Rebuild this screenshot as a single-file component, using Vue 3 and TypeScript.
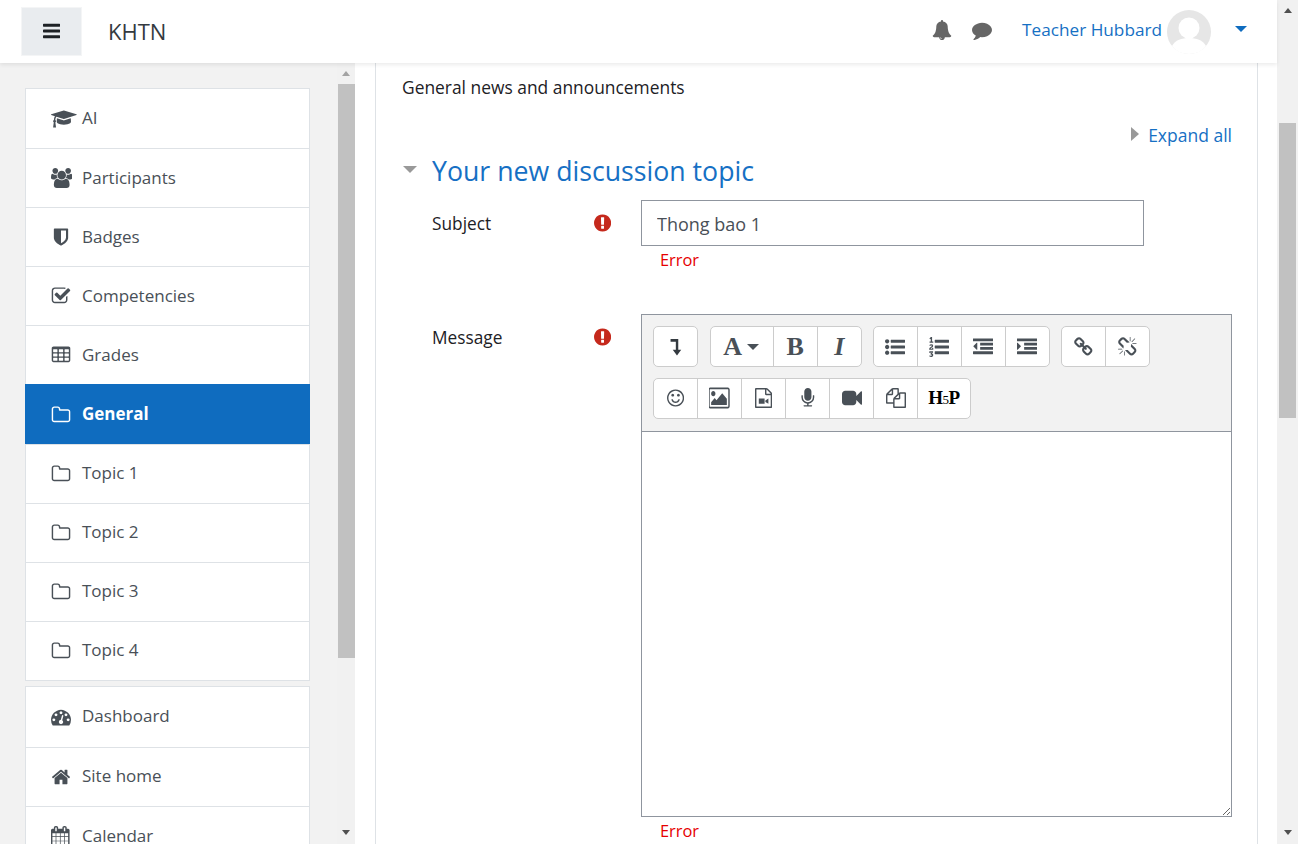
<script setup lang="ts">
import { h } from 'vue'
import type { FunctionalComponent } from 'vue'

// font-awesome style glyphs: [viewBox width, path]
const icons: Record<string, [number, string]> = {
  bars: [1536, 'M1536 1344v128q0 26-19 45t-45 19h-1408q-26 0-45-19t-19-45v-128q0-26 19-45t45-19h1408q26 0 45 19t19 45zm0-512v128q0 26-19 45t-45 19h-1408q-26 0-45-19t-19-45v-128q0-26 19-45t45-19h1408q26 0 45 19t19 45zm0-512v128q0 26-19 45t-45 19h-1408q-26 0-45-19t-19-45v-128q0-26 19-45t45-19h1408q26 0 45 19t19 45z'],
  bell: [1792, 'M912 1696q0-16-16-16-59 0-101.5-42.5t-42.5-101.5q0-16-16-16t-16 16q0 73 51.5 124.5t124.5 51.5q16 0 16-16zm816-288q0 52-38 90t-90 38h-448q0 106-75 181t-181 75-181-75-75-181h-448q-52 0-90-38t-38-90q50-42 91-88t85-119.5 74.5-158.5 50-206 19.5-260q0-152 117-282.5t307-158.5q-8-19-8-39 0-40 28-68t68-28 68 28 28 68q0 20-8 39 190 28 307 158.5t117 282.5q0 139 19.5 260t50 206 74.5 158.5 85 119.5 91 88z'],
  comment: [1792, 'M1792 896q0 174-120 321.5t-326 233-450 85.5q-70 0-145-8-198 175-460 242-49 14-114 22-17 2-30.5-9t-17.5-29v-1q-3-4-.5-12t2-10 4.5-9.5l6-9 7-8.5 8-9q7-8 31-34.5t34.5-38 31-39.5 32.5-51 27-59 26-76q-157-89-247.5-220t-90.5-281q0-130 71-248.5t191-204.5 286-136.5 348-50.5q244 0 450 85.5t326 233 120 321.5z'],
  cap: [2304, 'M1774 836l18 316q4 69-82 128t-235 93.5-323 34.5-323-34.5-235-93.5-82-128l18-316 574 181q22 7 48 7t48-7zm530-324q0 23-22 31l-1120 352q-4 1-10 1t-10-1l-652-206q-43 34-71 111.5t-34 178.5q63 36 63 109 0 69-58 107l58 433q2 14-8 25-9 11-24 11h-192q-15 0-24-11-10-11-8-25l58-433q-58-38-58-107 0-73 65-111 11-207 98-330l-333-104q-22-8-22-31t22-31l1120-352q4-1 10-1t10 1l1120 352q22 8 22 31z'],
  users: [1920, 'M593 896q-162 5-265 128h-134q-82 0-138-40.5t-56-118.5q0-353 124-353 6 0 43.5 21t97.5 42.5 119 21.5q67 0 133-23-5 37-5 66 0 139 81 256zm1071 637q0 120-73 189.5t-194 69.5h-874q-121 0-194-69.5t-73-189.5q0-53 3.5-103.5t14-109 26.5-108.5 43-97.5 62-81 85.5-53.5 111.5-20q10 0 43 21.5t73 48 107 48 135 21.5 135-21.5 107-48 73-48 43-21.5q61 0 111.5 20t85.5 53.5 62 81 43 97.5 26.5 108.5 14 109 3.5 103.5zm-1024-1277q0 106-75 181t-181 75-181-75-75-181 75-181 181-75 181 75 75 181zm704 384q0 159-112.5 271.5t-271.5 112.5-271.5-112.5-112.5-271.5 112.5-271.5 271.5-112.5 271.5 112.5 112.5 271.5zm576 225q0 78-56 118.5t-138 40.5h-134q-103-123-265-128 81-117 81-256 0-29-5-66 66 23 133 23 59 0 119-21.5t97.5-42.5 43.5-21q124 0 124 353zm-128-609q0 106-75 181t-181 75-181-75-75-181 75-181 181-75 181 75 75 181z'],
  shield: [1792, 'M1344 960v-640h-448v1137q119-63 213-137 235-184 235-360zm192-768v768q0 86-33.5 170.5t-83 150-118 127.5-126.5 103-121 77.5-89.5 49.5-42.5 20q-12 6-26 6t-26-6q-16-7-42.5-20t-89.5-49.5-121-77.5-126.5-103-118-127.5-83-150-33.5-170.5v-768q0-26 19-45t45-19h1152q26 0 45 19t19 45z'],
  check: [1792, 'M1472 930v318q0 119-84.5 203.5t-203.5 84.5h-832q-119 0-203.5-84.5t-84.5-203.5v-832q0-119 84.5-203.5t203.5-84.5h832q63 0 117 25 15 7 18 23 3 17-9 29l-49 49q-10 10-23 10-3 0-9-2-23-6-45-6h-832q-66 0-113 47t-47 113v832q0 66 47 113t113 47h832q66 0 113-47t47-113v-254q0-13 9-22l64-64q10-10 23-10 6 0 12 3 20 8 20 29zm231-489l-814 814q-24 24-57 24t-57-24l-430-430q-24-24-24-57t24-57l110-110q24-24 57-24t57 24l263 263 647-647q24-24 57-24t57 24l110 110q24 24 24 57t-24 57z'],
  table: [1792, 'M576 1376v-192q0-14-9-23t-23-9h-320q-14 0-23 9t-9 23v192q0 14 9 23t23 9h320q14 0 23-9t9-23zm0-384v-192q0-14-9-23t-23-9h-320q-14 0-23 9t-9 23v192q0 14 9 23t23 9h320q14 0 23-9t9-23zm512 384v-192q0-14-9-23t-23-9h-320q-14 0-23 9t-9 23v192q0 14 9 23t23 9h320q14 0 23-9t9-23zm-512-768v-192q0-14-9-23t-23-9h-320q-14 0-23 9t-9 23v192q0 14 9 23t23 9h320q14 0 23-9t9-23zm512 384v-192q0-14-9-23t-23-9h-320q-14 0-23 9t-9 23v192q0 14 9 23t23 9h320q14 0 23-9t9-23zm512 384v-192q0-14-9-23t-23-9h-320q-14 0-23 9t-9 23v192q0 14 9 23t23 9h320q14 0 23-9t9-23zm-512-768v-192q0-14-9-23t-23-9h-320q-14 0-23 9t-9 23v192q0 14 9 23t23 9h320q14 0 23-9t9-23zm512 384v-192q0-14-9-23t-23-9h-320q-14 0-23 9t-9 23v192q0 14 9 23t23 9h320q14 0 23-9t9-23zm0-384v-192q0-14-9-23t-23-9h-320q-14 0-23 9t-9 23v192q0 14 9 23t23 9h320q14 0 23-9t9-23zm128-320v1088q0 66-47 113t-113 47h-1344q-66 0-113-47t-47-113v-1088q0-66 47-113t113-47h1344q66 0 113 47t47 113z'],
  folder: [1792, 'M1600 1312v-704q0-40-28-68t-68-28h-704q-40 0-68-28t-28-68v-64q0-40-28-68t-68-28h-320q-40 0-68 28t-28 68v960q0 40 28 68t68 28h1216q40 0 68-28t28-68zm128-704v704q0 92-66 158t-158 66h-1216q-92 0-158-66t-66-158v-960q0-92 66-158t158-66h320q92 0 158 66t66 158v32h672q92 0 158 66t66 158z'],
  dashboard: [1792, 'M384 1152q0-53-37.5-90.5t-90.5-37.5-90.5 37.5-37.5 90.5 37.5 90.5 90.5 37.5 90.5-37.5 37.5-90.5zm192-448q0-53-37.5-90.5t-90.5-37.5-90.5 37.5-37.5 90.5 37.5 90.5 90.5 37.5 90.5-37.5 37.5-90.5zm428 481l101-382q6-26-7.5-48.5t-38.5-29.5-48 6.5-30 39.5l-101 382q-60 5-107 43.5t-63 98.5q-20 77 20 146t117 89 146-20 89-117q16-60-6-117t-72-91zm660-33q0-53-37.5-90.5t-90.5-37.5-90.5 37.5-37.5 90.5 37.5 90.5 90.5 37.5 90.5-37.5 37.5-90.5zm-640-640q0-53-37.5-90.5t-90.5-37.5-90.5 37.5-37.5 90.5 37.5 90.5 90.5 37.5 90.5-37.5 37.5-90.5zm448 192q0-53-37.5-90.5t-90.5-37.5-90.5 37.5-37.5 90.5 37.5 90.5 90.5 37.5 90.5-37.5 37.5-90.5zm320 448q0 261-141 483-19 29-54 29h-1402q-35 0-54-29-141-221-141-483 0-182 71-348t191-286 286-191 348-71 348 71 286 191 191 286 71 348z'],
  home: [1792, 'M1472 992v480q0 26-19 45t-45 19h-384v-384h-256v384h-384q-26 0-45-19t-19-45v-480q0-1 .5-3t.5-3l575-474 575 474q1 2 1 6zm223-69l-62 74q-8 9-21 11h-3q-13 0-21-7l-692-577-692 577q-12 8-24 7-13-2-21-11l-62-74q-8-10-7-23.5t11-21.5l719-599q32-26 76-26t76 26l244 204v-195q0-14 9-23t23-9h192q14 0 23 9t9 23v408l219 182q10 8 11 21.5t-7 23.5z'],
  calendar: [1664, 'M128 1664h288v-288h-288v288zm352 0h320v-288h-320v288zm-352-352h288v-320h-288v320zm352 0h320v-320h-320v320zm-352-384h288v-288h-288v288zm736 736h320v-288h-320v288zm-384-736h320v-288h-320v288zm768 736h288v-288h-288v288zm-384-352h320v-320h-320v320zm-352-864v-288q0-13-9.5-22.5t-22.5-9.5h-64q-13 0-22.5 9.5t-9.5 22.5v288q0 13 9.5 22.5t22.5 9.5h64q13 0 22.5-9.5t9.5-22.5zm736 864h288v-320h-288v320zm-384-384h320v-288h-320v288zm384 0h288v-288h-288v288zm32-480v-288q0-13-9.5-22.5t-22.5-9.5h-64q-13 0-22.5 9.5t-9.5 22.5v288q0 13 9.5 22.5t22.5 9.5h64q13 0 22.5-9.5t9.5-22.5zm384-64v1280q0 52-38 90t-90 38h-1408q-52 0-90-38t-38-90v-1280q0-52 38-90t90-38h128v-96q0-66 47-113t113-47h64q66 0 113 47t47 113v96h384v-96q0-66 47-113t113-47h64q66 0 113 47t47 113v96h128q52 0 90 38t38 90z'],
  alert: [1536, 'M768 128q209 0 385.5 103t279.5 279.5 103 385.5-103 385.5-279.5 279.5-385.5 103-385.5-103-279.5-279.5-103-385.5 103-385.5 279.5-279.5 385.5-103zm128 1247v-190q0-14-9-23.5t-22-9.5h-192q-13 0-23 10t-10 23v190q0 13 10 23t23 10h192q13 0 22-9.5t9-23.5zm-2-344l18-621q0-12-10-18-10-8-24-8h-220q-14 0-24 8-10 6-10 18l17 621q0 10 10 17.5t24 7.5h185q14 0 23.5-7.5t10.5-17.5z'],
  collapse: [1100, 'M200 320H800V1150H1030L700 1600 370 1150H610V520H200Z'],
  listUl: [1792, 'M384 1408q0 80-56 136t-136 56-136-56-56-136 56-136 136-56 136 56 56 136zm0-512q0 80-56 136t-136 56-136-56-56-136 56-136 136-56 136 56 56 136zm1408 416v192q0 13-9.5 22.5t-22.5 9.5h-1216q-13 0-22.5-9.5t-9.5-22.5v-192q0-13 9.5-22.5t22.5-9.5h1216q13 0 22.5 9.5t9.5 22.5zm-1408-928q0 80-56 136t-136 56-136-56-56-136 56-136 136-56 136 56 56 136zm1408 416v192q0 13-9.5 22.5t-22.5 9.5h-1216q-13 0-22.5-9.5t-9.5-22.5v-192q0-13 9.5-22.5t22.5-9.5h1216q13 0 22.5 9.5t9.5 22.5zm0-512v192q0 13-9.5 22.5t-22.5 9.5h-1216q-13 0-22.5-9.5t-9.5-22.5v-192q0-13 9.5-22.5t22.5-9.5h1216q13 0 22.5 9.5t9.5 22.5z'],
  listOl: [1792, 'M381 1620q0 80-54.5 126t-135.5 46q-106 0-172-66l57-88q49 45 106 45 29 0 50.5-14.5t21.5-42.5q0-64-105-56l-26-56q8-10 32.5-43.5t42.5-54 37-38.5v-1q-16 0-48.5 1t-48.5 1v53h-106v-152h333v88l-95 115q51 12 81 49t30 88zm2-627v159h-362q-6-36-6-54 0-51 23.5-93t56.5-68 66-47.5 56.5-43.5 23.5-45q0-25-14.5-38.5t-39.5-13.5q-46 0-81 58l-85-59q24-51 71.5-79.5t105.5-28.5q73 0 123 41.5t50 112.5q0 50-34 91.5t-75 64.5-75.5 50.5-35.5 52.5h127v-60h105zm1409 319v192q0 13-9.5 22.5t-22.5 9.5h-1216q-13 0-22.5-9.5t-9.5-22.5v-192q0-14 9-23t23-9h1216q13 0 22.5 9.5t9.5 22.5zm-1408-899v99h-335v-99h107q0-41 .5-122t.5-121v-12h-2q-8 17-50 54l-71-76 136-127h106v404h108zm1408 387v192q0 13-9.5 22.5t-22.5 9.5h-1216q-13 0-22.5-9.5t-9.5-22.5v-192q0-14 9-23t23-9h1216q13 0 22.5 9.5t9.5 22.5zm0-512v192q0 13-9.5 22.5t-22.5 9.5h-1216q-13 0-22.5-9.5t-9.5-22.5v-192q0-13 9.5-22.5t22.5-9.5h1216q13 0 22.5 9.5t9.5 22.5z'],
  outdent: [1792, 'M384 544v576q0 13-9.5 22.5t-22.5 9.5q-14 0-23-9l-288-288q-9-9-9-23t9-23l288-288q9-9 23-9 13 0 22.5 9.5t9.5 22.5zm1408 768v192q0 13-9.5 22.5t-22.5 9.5h-1728q-13 0-22.5-9.5t-9.5-22.5v-192q0-13 9.5-22.5t22.5-9.5h1728q13 0 22.5 9.5t9.5 22.5zm0-384v192q0 13-9.5 22.5t-22.5 9.5h-1088q-13 0-22.5-9.5t-9.5-22.5v-192q0-13 9.5-22.5t22.5-9.5h1088q13 0 22.5 9.5t9.5 22.5zm0-384v192q0 13-9.5 22.5t-22.5 9.5h-1088q-13 0-22.5-9.5t-9.5-22.5v-192q0-13 9.5-22.5t22.5-9.5h1088q13 0 22.5 9.5t9.5 22.5zm0-384v192q0 13-9.5 22.5t-22.5 9.5h-1728q-13 0-22.5-9.5t-9.5-22.5v-192q0-13 9.5-22.5t22.5-9.5h1728q13 0 22.5 9.5t9.5 22.5z'],
  indent: [1792, 'M352 832q0 14-9 23l-288 288q-9 9-23 9-13 0-22.5-9.5t-9.5-22.5v-576q0-13 9.5-22.5t22.5-9.5q14 0 23 9l288 288q9 9 9 23zm1440 480v192q0 13-9.5 22.5t-22.5 9.5h-1728q-13 0-22.5-9.5t-9.5-22.5v-192q0-13 9.5-22.5t22.5-9.5h1728q13 0 22.5 9.5t9.5 22.5zm0-384v192q0 13-9.5 22.5t-22.5 9.5h-1088q-13 0-22.5-9.5t-9.5-22.5v-192q0-13 9.5-22.5t22.5-9.5h1088q13 0 22.5 9.5t9.5 22.5zm0-384v192q0 13-9.5 22.5t-22.5 9.5h-1088q-13 0-22.5-9.5t-9.5-22.5v-192q0-13 9.5-22.5t22.5-9.5h1088q13 0 22.5 9.5t9.5 22.5zm0-384v192q0 13-9.5 22.5t-22.5 9.5h-1728q-13 0-22.5-9.5t-9.5-22.5v-192q0-13 9.5-22.5t22.5-9.5h1728q13 0 22.5 9.5t9.5 22.5z'],
  link: [1664, 'M1456 1216q0-40-28-68l-208-208q-28-28-68-28-42 0-72 32 3 3 19 18.5t21.5 21.5 15 19 13 25.5 3.5 27.5q0 40-28 68t-68 28q-15 0-27.5-3.5t-25.5-13-19-15-21.5-21.5-18.5-19q-33 31-33 73 0 40 28 68l206 207q27 27 68 27 40 0 68-26l147-146q28-28 28-67zm-703-705q0-40-28-68l-206-207q-28-28-68-28-39 0-68 27l-147 146q-28 28-28 67 0 40 28 68l208 208q27 27 68 27 42 0 72-31-3-3-19-18.5t-21.5-21.5-15-19-13-25.5-3.5-27.5q0-40 28-68t68-28q15 0 27.5 3.5t25.5 13 19 15 21.5 21.5 18.5 19q33-31 33-73zm895 705q0 120-85 203l-147 146q-83 83-203 83-121 0-204-85l-206-207q-83-83-83-203 0-123 88-209l-88-88q-86 88-208 88-120 0-204-84l-208-208q-84-84-84-204t85-203l147-146q83-83 203-83 121 0 204 85l206 207q83 83 83 203 0 123-88 209l88 88q86-88 208-88 120 0 204 84l208 208q84 84 84 204z'],
  unlink: [1664, 'M439 1271l-256 256q-11 9-23 9t-23-9q-9-10-9-23t9-23l256-256q10-9 23-9t23 9q9 10 9 23t-9 23zm169 41v320q0 14-9 23t-23 9-23-9-9-23v-320q0-14 9-23t23-9 23 9 9 23zm-224-224q0 14-9 23t-23 9h-320q-14 0-23-9t-9-23 9-23 23-9h320q14 0 23 9t9 23zm1264 128q0 120-85 203l-147 146q-83 83-203 83-121 0-204-85l-334-335q-21-21-42-56l239-18 273 274q27 27 68 27.5t68-26.5l147-146q28-28 28-67 0-40-28-68l-274-275 18-239q35 21 56 42l336 336q84 86 84 204zm-617-724l-239 18-273-274q-28-28-68-28-39 0-68 27l-147 146q-28 28-28 67 0 40 28 68l274 274-18 240q-35-21-56-42l-336-336q-84-86-84-204 0-120 85-203l147-146q83-83 203-83 121 0 204 85l334 335q21 21 42 56zm633 84q0 14-9 23t-23 9h-320q-14 0-23-9t-9-23 9-23 23-9h320q14 0 23 9t9 23zm-544-544v320q0 14-9 23t-23 9-23-9-9-23v-320q0-14 9-23t23-9 23 9 9 23zm407 151l-256 256q-11 9-23 9t-23-9q-9-10-9-23t9-23l256-256q10-9 23-9t23 9q9 10 9 23t-9 23z'],
  smile: [1536, 'M1134 1075q-37 121-138 195t-228 74-228-74-138-195q-8-25 4-48.5t38-31.5q25-8 48.5 4t31.5 38q25 80 92.5 129.5t151.5 49.5 151.5-49.5 92.5-129.5q8-26 32-38t49-4 37 31.5 4 48.5zm-494-435q0 53-37.5 90.5t-90.5 37.5-90.5-37.5-37.5-90.5 37.5-90.5 90.5-37.5 90.5 37.5 37.5 90.5zm512 0q0 53-37.5 90.5t-90.5 37.5-90.5-37.5-37.5-90.5 37.5-90.5 90.5-37.5 90.5 37.5 37.5 90.5zm256 256q0-130-51-248.5t-136.5-204-204-136.5-248.5-51-248.5 51-204 136.5-136.5 204-51 248.5 51 248.5 136.5 204 204 136.5 248.5 51 248.5-51 204-136.5 136.5-204 51-248.5zm128 0q0 209-103 385.5t-279.5 279.5-385.5 103-385.5-103-279.5-279.5-103-385.5 103-385.5 279.5-279.5 385.5-103 385.5 103 279.5 279.5 103 385.5z'],
  image: [1920, 'M576 576q0 80-56 136t-136 56-136-56-56-136 56-136 136-56 136 56 56 136zm1024 384v448h-1408v-192l320-320 160 160 512-512zm96-704h-1600q-13 0-22.5 9.5t-9.5 22.5v1216q0 13 9.5 22.5t22.5 9.5h1600q13 0 22.5-9.5t9.5-22.5v-1216q0-13-9.5-22.5t-22.5-9.5zm160 32v1216q0 66-47 113t-113 47h-1600q-66 0-113-47t-47-113v-1216q0-66 47-113t113-47h1600q66 0 113 47t47 113z'],
  fileVideo: [1536, 'M1468 380q28 28 48 76t20 88v1152q0 40-28 68t-68 28h-1344q-40 0-68-28t-28-68v-1600q0-40 28-68t68-28h896q40 0 88 20t76 48zm-444-244v376h376q-10-29-22-41l-313-313q-12-12-41-22zm384 1528v-1024h-416q-40 0-68-28t-28-68v-416h-768v1536h1280zM340 940h520v480H340zM930 1110l270-170v480l-270-170z'],
  mic: [1408, 'M1280 704v128q0 221-147.5 384.5t-364.5 187.5v132h256q26 0 45 19t19 45-19 45-45 19h-640q-26 0-45-19t-19-45 19-45 45-19h256v-132q-217-24-364.5-187.5t-147.5-384.5v-128q0-26 19-45t45-19 45 19 19 45v128q0 185 131.5 316.5t316.5 131.5 316.5-131.5 131.5-316.5v-128q0-26 19-45t45-19 45 19 19 45zm-256-384v512q0 132-94 226t-226 94-226-94-94-226v-512q0-132 94-226t226-94 226 94 94 226z'],
  video: [1792, 'M1792 352v1088q0 42-39 59-13 5-25 5-27 0-45-19l-403-403v166q0 119-84.5 203.5t-203.5 84.5h-704q-119 0-203.5-84.5t-84.5-203.5v-704q0-119 84.5-203.5t203.5-84.5h704q119 0 203.5 84.5t84.5 203.5v165l403-402q18-19 45-19 12 0 25 5 39 17 39 59z'],
  copy: [1792, 'M1696 384q40 0 68 28t28 68v1216q0 40-28 68t-68 28h-960q-40 0-68-28t-28-68v-288h-544q-40 0-68-28t-28-68v-672q0-40 20-88t48-76l408-408q28-28 76-48t88-20h416q40 0 68 28t28 68v328q68-40 128-40h416zm-544 213l-299 299h299v-299zm-640-384l-299 299h299v-299zm196 647l316-316v-416h-384v416q0 40-28 68t-68 28h-416v640h512v-256q0-40 20-88t48-76zm956 804v-1152h-384v416q0 40-28 68t-68 28h-416v640h896z']
}

const Icon: FunctionalComponent<{ name: string }> = (props) => {
  const [width, d] = icons[props.name]
  return h('svg', { viewBox: `0 0 ${width} 1792`, fill: 'currentColor', class: 'icon' }, [h('path', { d })])
}
Icon.props = ['name']

interface NavItem {
  label: string
  icon: string
  active?: boolean
}

const courseNav: NavItem[] = [
  { label: 'AI', icon: 'cap' },
  { label: 'Participants', icon: 'users' },
  { label: 'Badges', icon: 'shield' },
  { label: 'Competencies', icon: 'check' },
  { label: 'Grades', icon: 'table' },
  { label: 'General', icon: 'folder', active: true },
  { label: 'Topic 1', icon: 'folder' },
  { label: 'Topic 2', icon: 'folder' },
  { label: 'Topic 3', icon: 'folder' },
  { label: 'Topic 4', icon: 'folder' }
]

const siteNav: NavItem[] = [
  { label: 'Dashboard', icon: 'dashboard' },
  { label: 'Site home', icon: 'home' },
  { label: 'Calendar', icon: 'calendar' }
]
</script>

<template>
  <div class="page">
    <div class="window">
      <header class="navbar">
        <button class="menu-btn"><Icon name="bars" class="menu-icon" /></button>
        <span class="brand">KHTN</span>
        <div class="nav-right">
          <Icon name="bell" class="nav-icon" />
          <Icon name="comment" class="nav-icon chat" />
          <a class="user-name">Teacher Hubbard</a>
          <svg class="avatar" viewBox="0 0 44 44">
            <circle cx="22" cy="22" r="22" fill="#e6e6e6" />
            <circle cx="22" cy="18" r="10.5" fill="#fff" />
            <path d="M5 36c3-6 10-8 17-8s14 2 17 8c-4 5-10 8-17 8S9 41 5 36z" fill="#fff" />
          </svg>
          <span class="user-caret"></span>
        </div>
      </header>

      <div class="body">
        <aside class="drawer">
          <div class="drawer-lists">
            <nav class="nav-group">
              <a v-for="item in courseNav" :key="item.label" class="nav-item" :class="{ active: item.active }">
                <span class="nav-slot"><Icon :name="item.icon" /></span>
                <span class="nav-text">{{ item.label }}</span>
              </a>
            </nav>
            <nav class="nav-group">
              <a v-for="item in siteNav" :key="item.label" class="nav-item">
                <span class="nav-slot"><Icon :name="item.icon" /></span>
                <span class="nav-text">{{ item.label }}</span>
              </a>
            </nav>
          </div>
          <div class="scrollbar drawer-bar">
            <span class="arrow-up faded"></span>
            <span class="thumb"></span>
            <span class="arrow-down"></span>
          </div>
        </aside>

        <main class="main">
          <section class="card">
            <p class="intro">General news and announcements</p>
            <div class="expand-row">
              <span class="caret-right"></span>
              <a class="expand-link">Expand all</a>
            </div>
            <h2 class="legend"><span class="caret-down"></span>Your new discussion topic</h2>

            <div class="form-row">
              <div class="form-label">
                <span>Subject</span>
                <Icon name="alert" class="req" />
              </div>
              <div class="subject-field">
                <input class="subject-input" type="text" value="Thong bao 1" />
                <div class="error">Error</div>
              </div>
            </div>

            <div class="form-row message-row">
              <div class="form-label">
                <span>Message</span>
                <Icon name="alert" class="req" />
              </div>
              <div>
                <div class="editor">
                  <div class="toolbar">
                    <div class="tool-row">
                      <div class="tool-group first">
                        <button class="tool"><Icon name="collapse" class="tool-sm" /></button>
                      </div>
                      <div class="tool-group">
                        <button class="tool tool-font"><span class="serif">A</span><span class="font-caret"></span></button>
                        <button class="tool"><span class="serif">B</span></button>
                        <button class="tool"><span class="serif italic">I</span></button>
                      </div>
                      <div class="tool-group">
                        <button class="tool"><Icon name="listUl" /></button>
                        <button class="tool"><Icon name="listOl" /></button>
                        <button class="tool"><Icon name="outdent" /></button>
                        <button class="tool"><Icon name="indent" /></button>
                      </div>
                      <div class="tool-group">
                        <button class="tool"><Icon name="link" /></button>
                        <button class="tool"><Icon name="unlink" /></button>
                      </div>
                    </div>
                    <div class="tool-row lower">
                      <div class="tool-group">
                        <button class="tool"><Icon name="smile" /></button>
                        <button class="tool"><Icon name="image" class="tall" /></button>
                        <button class="tool"><Icon name="fileVideo" /></button>
                        <button class="tool"><Icon name="mic" /></button>
                        <button class="tool"><Icon name="video" /></button>
                        <button class="tool"><Icon name="copy" /></button>
                        <button class="tool tool-h5p"><span class="h5p">H<small>5</small>P</span></button>
                      </div>
                    </div>
                  </div>
                  <textarea class="editor-text"></textarea>
                </div>
                <div class="error">Error</div>
              </div>
            </div>
          </section>
        </main>
      </div>
    </div>

    <div class="scrollbar page-bar">
      <span class="arrow-up"></span>
      <span class="thumb"></span>
      <span class="arrow-down"></span>
    </div>
  </div>
</template>

<style>
html,
body {
  overflow: hidden;
}
</style>

<style scoped>
.page {
  display: flex;
  height: 844px;
  overflow: hidden;
  font-family: "Open Sans", "Noto Sans", sans-serif;
  font-size: 17.3px;
  line-height: 22px;
  color: #1d2125;
  background: #fff;
}

.window {
  flex: 1;
  min-width: 0;
  display: flex;
  flex-direction: column;
}

.icon {
  display: block;
  height: 20px;
  flex: none;
}

/* top bar */
.navbar {
  position: relative;
  z-index: 2;
  flex: none;
  height: 63px;
  display: flex;
  align-items: center;
  background: #fff;
  box-shadow: 0 2px 4px rgba(0, 0, 0, 0.08);
}

.menu-btn {
  width: 61px;
  height: 49px;
  margin: -1px 0 0 21px;
  padding: 0;
  display: flex;
  align-items: center;
  justify-content: center;
  background: #e9ecef;
  border: 1px solid #f4f5f6;
}

.menu-icon {
  height: 20px;
  color: #1d2125;
}

.brand {
  margin: -2px 0 0 26px;
  font-size: 22px;
  color: #343a40;
}

.nav-right {
  margin-left: auto;
  display: flex;
  align-items: center;
  padding-right: 30px;
}

.nav-icon {
  color: #666;
  margin-top: -3px;
}

.chat {
  margin: -3px 30px 0 20px;
}

.user-name {
  margin-top: -3px;
  font-size: 17.2px;
  color: #1670c4;
}

.avatar {
  width: 44px;
  height: 44px;
  margin: 0 24px 0 5px;
}

.user-caret {
  border-left: 6px solid transparent;
  border-right: 6px solid transparent;
  border-top: 6px solid #0f6cbf;
  margin-top: -5px;
}

.body {
  flex: 1;
  min-height: 0;
  display: flex;
}

/* left drawer */
.drawer {
  flex: none;
  width: 355px;
  display: flex;
  background: #f2f2f2;
}

.drawer-lists {
  width: 337px;
  padding: 25px 27px 0 25px;
  box-sizing: border-box;
  overflow: hidden;
}

.nav-group {
  background: #fff;
  border: 1px solid #dee2e6;
  margin-bottom: 5px;
}

.nav-item {
  display: flex;
  align-items: center;
  height: 59.1px;
  box-sizing: border-box;
  padding-left: 25px;
  font-size: 17px;
  color: #495057;
  border-top: 1px solid #dee2e6;
}

.nav-group + .nav-group .nav-item {
  height: 59.6px;
}

.nav-item:first-child {
  border-top: 0;
}

.nav-text {
  margin-top: -1px;
}

.nav-item.active {
  margin: 0 -1px;
  padding-left: 26px;
  background: #0f6cbf;
  border-top-color: #0f6cbf;
  color: #fff;
  font-weight: 700;
}

.nav-slot {
  width: 31px;
  flex: none;
}

/* fake scrollbars */
.scrollbar {
  flex: none;
  display: flex;
  flex-direction: column;
  align-items: center;
  background: #f1f1f1;
}

.drawer-bar {
  width: 18px;
}

.page-bar {
  width: 21px;
}

.thumb {
  display: block;
  width: 17px;
  background: #c1c1c1;
}

.drawer-bar .thumb {
  margin-top: 8px;
  height: 574px;
}

.page-bar .thumb {
  margin-top: 110px;
  height: 295px;
}

.arrow-up,
.arrow-down {
  border-left: 4.5px solid transparent;
  border-right: 4.5px solid transparent;
}

.arrow-up {
  margin-top: 8px;
  border-bottom: 5px solid #505050;
}

.arrow-up.faded {
  border-bottom-color: #a3a3a3;
}

.arrow-down {
  margin-top: auto;
  margin-bottom: 9px;
  border-top: 5px solid #505050;
}

/* main region */
.main {
  flex: 1;
  min-width: 0;
  padding: 0 19px 0 20px;
  overflow: hidden;
}

.card {
  height: 100%;
  box-sizing: border-box;
  padding: 13px 25px 0 26px;
  border-left: 1px solid #dee2e6;
  border-right: 1px solid #dee2e6;
}

.intro {
  margin: 0;
  color: #1d2125;
  font-size: 17.4px;
}

.expand-row {
  display: flex;
  justify-content: flex-end;
  align-items: center;
  margin-top: 26px;
}

.caret-right {
  margin-right: 9px;
  margin-top: -3px;
  border-top: 7.5px solid transparent;
  border-bottom: 7.5px solid transparent;
  border-left: 8px solid #999;
}

.expand-link {
  font-size: 17.5px;
  color: #1670c4;
}

.legend {
  display: flex;
  align-items: center;
  margin: 5px 0 0;
  font-size: 26.7px;
  line-height: 40px;
  font-weight: 400;
  color: #1670c4;
}

.caret-down {
  margin-right: 15px;
  margin-left: 1px;
  margin-top: -3px;
  border-left: 7.5px solid transparent;
  border-right: 7.5px solid transparent;
  border-top: 7.5px solid #999;
}

.form-row {
  display: grid;
  grid-template-columns: 179px 1fr;
  column-gap: 30px;
  margin: 9px 0 0 30px;
}

.message-row {
  margin-top: 43px;
}

.form-label {
  display: flex;
  justify-content: space-between;
  align-items: center;
  height: 22px;
  padding-top: 13px;
  color: #1d2125;
}

.req {
  color: #c5291c;
  margin-top: -2px;
}

.subject-input {
  display: block;
  width: 503px;
  height: 46px;
  box-sizing: border-box;
  padding: 2px 15px 0;
  border: 1px solid #8f959e;
  font: inherit;
  font-size: 18px;
  color: #495057;
  outline: none;
}

.error {
  margin: 3px 0 0 19px;
  font-size: 16.4px;
  color: #e60000;
}

/* editor */
.editor {
  display: flex;
  flex-direction: column;
  height: 503px;
  box-sizing: border-box;
  border: 1px solid #8f959e;
}

.toolbar {
  flex: none;
  display: flex;
  flex-direction: column;
  gap: 11px;
  padding: 11px 11px 12px;
  background: #f2f2f2;
  border-bottom: 1px solid #8f959e;
}

.tool-row {
  display: flex;
  gap: 11.2px;
}

.tool-group {
  display: flex;
  height: 41px;
  box-sizing: border-box;
  background: #fff;
  border: 1px solid #ccc;
  border-radius: 5px;
}

.tool-group.first {
  margin-right: 0.5px;
}

.tool {
  width: 44px;
  padding: 0;
  display: flex;
  align-items: center;
  justify-content: center;
  background: none;
  border: 0;
  border-right: 1px solid #ccc;
  color: #495057;
}

.tool:last-child {
  width: 43px;
  border-right: 0;
}

.lower .tool {
  padding-bottom: 2px;
}

.tall {
  transform: scaleY(1.22);
}

.tool-font {
  width: 63px;
  gap: 5px;
  padding-right: 1px;
}

.tool.tool-h5p {
  width: 52px;
}

.tool-sm {
  height: 23px;
  color: #343a40;
}

.serif {
  font-family: "Liberation Serif", serif;
  font-size: 26px;
  font-weight: 700;
  line-height: 1;
}

.italic {
  font-style: italic;
}

.font-caret {
  border-left: 6.5px solid transparent;
  border-right: 6.5px solid transparent;
  border-top: 6.5px solid #495057;
}

.h5p {
  font-family: "Liberation Serif", serif;
  font-size: 19px;
  font-weight: 700;
  letter-spacing: -0.5px;
  color: #000;
}

.h5p small {
  font-size: 13px;
  font-weight: 400;
}

.editor-text {
  flex: 1;
  display: block;
  width: 100%;
  box-sizing: border-box;
  border: 0;
  outline: none;
  resize: vertical;
}
</style>
